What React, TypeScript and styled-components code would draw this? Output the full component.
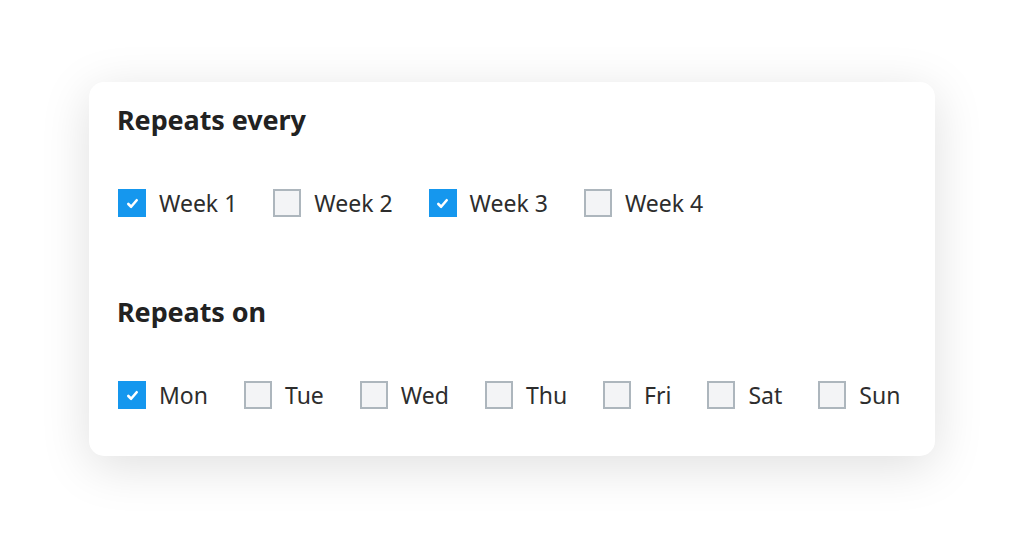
import styled, { createGlobalStyle } from "styled-components";

const GlobalStyle = createGlobalStyle`
  html, body {
    margin: 0;
    padding: 0;
    background: #ffffff;
  }
  body {
    font-family: "Noto Sans", "Open Sans", sans-serif;
  }
`;

const Page = styled.div`
  width: 1024px;
  height: 551px;
  padding-top: 82px;
  box-sizing: border-box;
  overflow: hidden;
`;

const Card = styled.div`
  width: 846px;
  margin: 0 auto;
  box-sizing: border-box;
  background: #ffffff;
  border-radius: 15px;
  box-shadow: 0 10px 50px rgba(0, 0, 0, 0.13);
  padding: 21px 29px 47px;
  display: flex;
  flex-direction: column;
  gap: 78px;
`;

const Section = styled.section`
  display: flex;
  flex-direction: column;
  gap: 52px;
`;

const Heading = styled.h2`
  margin: 0 0 0 -1px;
  font-size: 27px;
  line-height: 34px;
  font-weight: 700;
  color: #222222;
  letter-spacing: -0.1px;
`;

const Options = styled.div`
  display: flex;
  align-items: center;
  gap: 36px;
`;

const Option = styled.label`
  display: flex;
  align-items: center;
  gap: 13px;
  height: 28px;
  cursor: pointer;
`;

const Box = styled.span<{ $checked: boolean }>`
  width: 28px;
  height: 28px;
  box-sizing: border-box;
  display: flex;
  align-items: center;
  justify-content: center;
  border: 2px solid ${(p) => (p.$checked ? "#1597ee" : "#adb6bd")};
  background: ${(p) => (p.$checked ? "#1597ee" : "#f3f4f6")};
`;

const Label = styled.span`
  font-size: 23px;
  color: #2d2d2d;
`;

const Check = () => (
  <svg width="13" height="13" viewBox="0 0 14 14" fill="none">
    <path
      d="M2.5 7.5 L5.5 10.5 L11.5 3.5"
      stroke="#ffffff"
      strokeWidth="2.8"
      strokeLinecap="round"
      strokeLinejoin="round"
    />
  </svg>
);

type Item = { name: string; checked: boolean };

const weeks: Item[] = [
  { name: "Week 1", checked: true },
  { name: "Week 2", checked: false },
  { name: "Week 3", checked: true },
  { name: "Week 4", checked: false },
];

const days: Item[] = [
  { name: "Mon", checked: true },
  { name: "Tue", checked: false },
  { name: "Wed", checked: false },
  { name: "Thu", checked: false },
  { name: "Fri", checked: false },
  { name: "Sat", checked: false },
  { name: "Sun", checked: false },
];

const OptionRow = ({ items }: { items: Item[] }) => (
  <Options>
    {items.map((it) => (
      <Option key={it.name}>
        <Box $checked={it.checked}>{it.checked && <Check />}</Box>
        <Label>{it.name}</Label>
      </Option>
    ))}
  </Options>
);

const App = () => {
  return (
    <Page>
      <GlobalStyle />
      <Card>
        <Section>
          <Heading>Repeats every</Heading>
          <OptionRow items={weeks} />
        </Section>
        <Section>
          <Heading>Repeats on</Heading>
          <OptionRow items={days} />
        </Section>
      </Card>
    </Page>
  );
};

export default App;
